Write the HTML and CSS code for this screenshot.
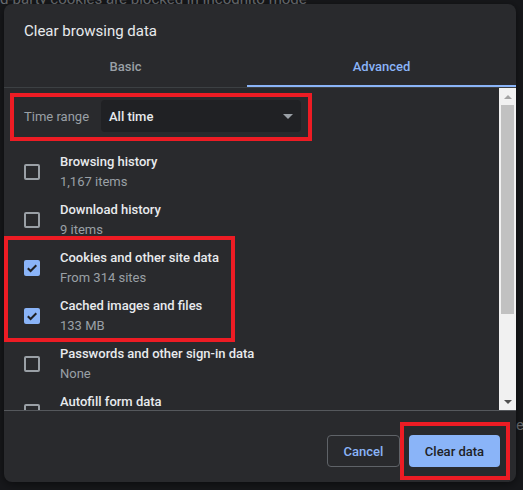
FILE: index.html
```html
<!DOCTYPE html>
<html>
<head>
<meta charset="utf-8">
<link rel="stylesheet" href="styles.css">
</head>
<body>
<div class="page">
  <div class="page-text">d-party cookies are blocked in Incognito mode</div>
  <div class="page-side-e">e</div>
</div>

<div class="dialog">
  <div class="title">Clear browsing data</div>
  <div class="tabs">
    <div class="tab tab-basic">Basic</div>
    <div class="tab tab-active">Advanced</div>
  </div>
  <div class="scroller">
    <div class="content">
      <div class="range-row">
        <div class="range-label">Time range</div>
        <div class="select">
          <span class="select-text">All time</span>
          <span class="select-arrow"></span>
        </div>
      </div>

      <div class="item">
        <span class="checkbox"></span>
        <div class="item-text"><div class="item-title">Browsing history</div><div class="item-sub">1,167 items</div></div>
      </div>
      <div class="item">
        <span class="checkbox"></span>
        <div class="item-text"><div class="item-title">Download history</div><div class="item-sub">9 items</div></div>
      </div>
      <div class="item">
        <span class="checkbox checked"><svg viewBox="0 0 16 16" width="16" height="16"><path d="M3.8 8.2 L6.6 11 L12.3 5.3" fill="none" stroke="#202124" stroke-width="2"/></svg></span>
        <div class="item-text"><div class="item-title">Cookies and other site data</div><div class="item-sub">From 314 sites</div></div>
      </div>
      <div class="item">
        <span class="checkbox checked"><svg viewBox="0 0 16 16" width="16" height="16"><path d="M3.8 8.2 L6.6 11 L12.3 5.3" fill="none" stroke="#202124" stroke-width="2"/></svg></span>
        <div class="item-text"><div class="item-title">Cached images and files</div><div class="item-sub">133 MB</div></div>
      </div>
      <div class="item">
        <span class="checkbox"></span>
        <div class="item-text"><div class="item-title">Passwords and other sign-in data</div><div class="item-sub">None</div></div>
      </div>
      <div class="item">
        <span class="checkbox"></span>
        <div class="item-text"><div class="item-title">Autofill form data</div><div class="item-sub">&nbsp;</div></div>
      </div>
    </div>
    <div class="scrollbar">
      <div class="sb-btn"><span class="sb-up"></span></div>
      <div class="sb-track"><div class="sb-thumb"></div></div>
      <div class="sb-btn"><span class="sb-down"></span></div>
    </div>
  </div>
  <div class="footer">
    <button class="btn btn-cancel">Cancel</button>
    <button class="btn btn-primary">Clear data</button>
  </div>
</div>

<div class="mark mark-range"></div>
<div class="mark mark-cookies"></div>
<div class="mark mark-clear"></div>
</body>
</html>
```

FILE: styles.css
```css
* { box-sizing: border-box; }
html, body {
  margin: 0;
  padding: 0;
  width: 523px;
  height: 490px;
  overflow: hidden;
  background: #17181b;
  font-family: Roboto, "Liberation Sans", Arial, sans-serif;
}
.page {
  position: relative;
  width: 523px;
  height: 490px;
}
.page-text {
  position: absolute;
  left: 0;
  top: -8px;
  font-size: 15px;
  line-height: 15px;
  color: #6d7074;
  white-space: nowrap;
}
.page-side-e {
  position: absolute;
  left: 516px;
  top: 416px;
  font-size: 15px;
  color: #6d7074;
}
.dialog {
  position: absolute;
  left: 4px;
  top: 4px;
  width: 512px;
  height: 478px;
  background: #292a2d;
  border-radius: 8px;
  display: flex;
  flex-direction: column;
  overflow: hidden;
  box-shadow: 0 2px 10px rgba(0,0,0,0.5);
}
.title {
  padding: 17px 20px 0 20px;
  height: 41px;
  font-size: 15px;
  line-height: 20px;
  color: #e8eaed;
}
.tabs {
  display: flex;
  height: 43px;
  border-bottom: 1px solid #3c4043;
}
.tab {
  height: 42px;
  display: flex;
  align-items: center;
  justify-content: center;
  font-size: 13px;
  font-weight: 500;
  color: #9aa0a6;
}
.tab-basic { width: 243px; }
.tab-active {
  flex: 1;
  color: #8ab4f8;
  border-bottom: 2px solid #8ab4f8;
  padding-top: 2px;
}
.scroller {
  display: flex;
  height: 322px;
}
.content {
  flex: 1;
  overflow: hidden;
}
.range-row {
  display: flex;
  align-items: center;
  padding: 12px 0 16px 20px;
}
.range-label {
  width: 77px;
  font-size: 13px;
  color: #9aa0a6;
}
.select {
  width: 200px;
  height: 32px;
  background: #202124;
  border-radius: 4px;
  display: flex;
  align-items: center;
  justify-content: space-between;
  padding: 0 8px;
}
.select-text {
  font-size: 13px;
  font-weight: 500;
  color: #e8eaed;
}
.select-arrow {
  width: 0;
  height: 0;
  border-left: 5px solid transparent;
  border-right: 5px solid transparent;
  border-top: 5px solid #9aa0a6;
}
.item {
  display: flex;
  align-items: center;
  height: 48px;
  padding-left: 20px;
}
.checkbox {
  width: 16px;
  height: 16px;
  border: 2px solid #9aa0a6;
  border-radius: 2px;
  flex: none;
  display: flex;
  align-items: center;
  justify-content: center;
}
.checkbox.checked {
  background: #8ab4f8;
  border: none;
}
.item-text {
  margin-left: 20px;
  font-size: 13px;
  line-height: 20px;
}
.item-title {
  color: #e8eaed;
  font-weight: 500;
}
.item-sub {
  color: #9aa0a6;
}
.scrollbar {
  width: 17px;
  background: #f1f1f1;
  display: flex;
  flex-direction: column;
}
.sb-btn {
  height: 17px;
  display: flex;
  align-items: center;
  justify-content: center;
}
.sb-up {
  width: 0; height: 0;
  border-left: 4px solid transparent;
  border-right: 4px solid transparent;
  border-bottom: 4px solid #a3a3a3;
}
.sb-down {
  width: 0; height: 0;
  border-left: 4px solid transparent;
  border-right: 4px solid transparent;
  border-top: 4px solid #505050;
}
.sb-track {
  flex: 1;
  padding: 0 2px;
}
.sb-thumb {
  height: 209px;
  background: #c1c1c1;
}
.footer {
  flex: 1;
  border-top: 1px solid #55585c;
  display: flex;
  justify-content: flex-end;
  align-items: flex-start;
  padding: 24px 16px 0 0;
  gap: 9px;
}
.btn {
  height: 32px;
  border-radius: 4px;
  font-family: Roboto, "Liberation Sans", Arial, sans-serif;
  font-size: 13px;
  font-weight: 500;
  padding: 0;
}
.btn-cancel {
  width: 73px;
  background: transparent;
  border: 1px solid #5f6368;
  color: #8ab4f8;
}
.btn-primary {
  width: 91px;
  background: #8ab4f8;
  border: none;
  color: #202124;
}
.mark {
  position: absolute;
  border: 4px solid #ed1c24;
}
.mark-range { left: 10px; top: 93px; width: 302px; height: 48px; }
.mark-cookies { left: 4px; top: 236px; width: 231px; height: 106px; }
.mark-clear { left: 400px; top: 422px; width: 110px; height: 58px; }
```
